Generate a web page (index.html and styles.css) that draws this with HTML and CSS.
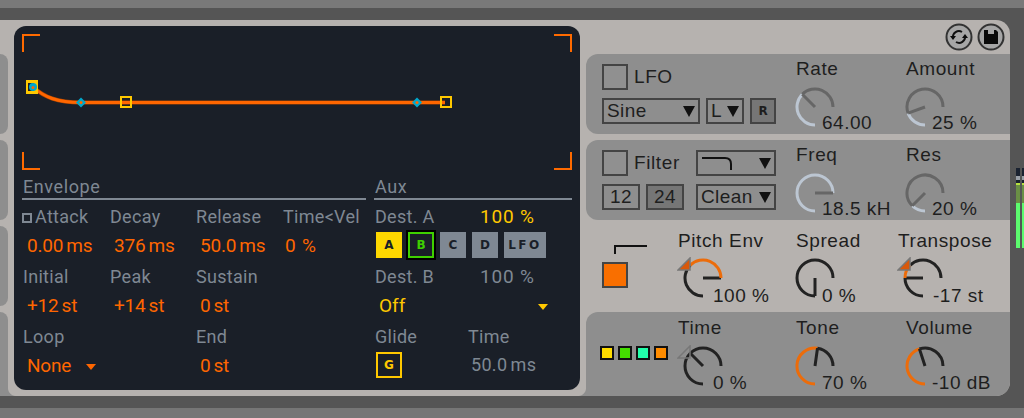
FILE: index.html
```html
<!DOCTYPE html>
<html lang="en">
<head>
    <meta charset="UTF-8">
    <title>Synth device</title>
    <link rel="stylesheet" href="styles.css">
</head>
<body>
    <div class="strip"></div>
    <div class="shelf">
        <div class="device">
            <div class="stubs">
                <div class="stub"></div>
                <div class="stub"></div>
                <div class="stub"></div>
                <div class="stub stub-last"></div>
            </div>

            <div class="screen">
                <svg class="graph" width="550" height="136" viewBox="0 0 550 136">
                    <path class="corner" d="M1 18V1H18M532 1H549V18M1 118V135H18M532 135H549V118"/>
                    <path class="curve-edge" d="M11 53C22 63 35 68.5 59 68.5L423 68.5"/>
                    <path class="curve" d="M11 53C22 63 35 68.5 59 68.5L423 68.5"/>
                    <rect class="handle-on" x="4" y="46" width="12" height="14"/>
                    <rect class="handle-in" x="6" y="49" width="6" height="8"/>
                    <circle class="dot" cx="11" cy="53" r="4"/>
                    <circle class="dot-mid" cx="11" cy="53.5" r="1.5"/>
                    <path class="dot" d="M59 63.5L64 68.5L59 73.5L54 68.5Z"/>
                    <circle class="dot-mid" cx="59" cy="68.5" r="1.5"/>
                    <rect class="handle" x="99" y="63" width="10" height="10"/>
                    <path class="dot" d="M395 63.5L400 68.5L395 73.5L390 68.5Z"/>
                    <circle class="dot-mid" cx="395" cy="68.5" r="1.5"/>
                    <rect class="handle" x="419" y="63" width="10" height="10"/>
                </svg>

                <div class="params">
                    <div class="envelope">
                        <div class="heading">Envelope</div>
                        <div class="env-grid">
                            <div class="param">
                                <div class="label"><span class="tick"></span>Attack</div>
                                <div class="value">0.00 ms</div>
                            </div>
                            <div class="param">
                                <div class="label">Decay</div>
                                <div class="value">376 ms</div>
                            </div>
                            <div class="param">
                                <div class="label">Release</div>
                                <div class="value">50.0 ms</div>
                            </div>
                            <div class="param">
                                <div class="label">Time&lt;Vel</div>
                                <div class="value value-pct">0 %</div>
                            </div>
                            <div class="param">
                                <div class="label">Initial</div>
                                <div class="value">+12 st</div>
                            </div>
                            <div class="param">
                                <div class="label">Peak</div>
                                <div class="value">+14 st</div>
                            </div>
                            <div class="param">
                                <div class="label">Sustain</div>
                                <div class="value">0 st</div>
                            </div>
                            <div class="param"></div>
                            <div class="param">
                                <div class="label">Loop</div>
                                <div class="value">None<span class="arrow"></span></div>
                            </div>
                            <div class="param"></div>
                            <div class="param">
                                <div class="label">End</div>
                                <div class="value">0 st</div>
                            </div>
                        </div>
                    </div>

                    <div class="aux">
                        <div class="heading">Aux</div>
                        <div class="aux-row">
                            <div class="label aux-name">Dest. A</div>
                            <div class="label amount amount-on">100 %</div>
                        </div>
                        <div class="aux-buttons">
                            <div class="dest dest-a">A</div>
                            <div class="dest dest-b">B</div>
                            <div class="dest">C</div>
                            <div class="dest dest-d">D</div>
                            <div class="dest dest-lfo">LFO</div>
                        </div>
                        <div class="aux-row aux-gap">
                            <div class="label aux-name">Dest. B</div>
                            <div class="label amount">100 %</div>
                        </div>
                        <div class="aux-off">Off<span class="arrow arrow-yellow"></span></div>
                        <div class="aux-row aux-gap">
                            <div class="label glide-name">Glide</div>
                            <div class="label">Time</div>
                        </div>
                        <div class="aux-row">
                            <div class="glide-slot"><div class="dest dest-g">G</div></div>
                            <div class="label glide-time">50.0 ms</div>
                        </div>
                    </div>
                </div>
            </div>

            <div class="controls">
                <div class="head">
                    <svg class="head-icon" width="28" height="28" viewBox="0 0 28 28">
                        <circle class="head-ring" cx="14" cy="14" r="12.5"/>
                        <path class="head-line" d="M8 15A6 6 0 0 1 17 9M20 13A6 6 0 0 1 11 19"/>
                        <path class="head-fill" d="M5 13H11L8 17ZM23 15H17L20 11Z"/>
                    </svg>
                    <svg class="head-icon" width="28" height="28" viewBox="0 0 28 28">
                        <circle class="head-ring" cx="14" cy="14" r="12.5"/>
                        <path class="head-fill" d="M7 7H19L21 9V21H7Z"/>
                        <rect class="head-notch" x="11" y="7" width="6" height="4"/>
                    </svg>
                </div>

                <div class="panel panel-gray">
                    <div class="left-wide">
                        <div class="left-row">
                            <div class="check"></div>
                            <div class="caption">LFO</div>
                        </div>
                        <div class="left-row">
                            <div class="box box-sine">Sine<span class="drop"></span></div>
                            <div class="box box-l">L<span class="drop"></span></div>
                            <div class="box box-r">R</div>
                        </div>
                    </div>
                    <div class="knob-col">
                        <div class="knob-label">Rate</div>
                        <div class="knob">
                            <svg class="dial" width="40" height="40" viewBox="0 0 40 40">
                                <path class="off-fill" d="M20 38A18 18 0 0 1 7.27 7.27"/>
                                <path class="off-track" d="M7.27 7.27A18 18 0 0 1 38 20M20 20L7.27 7.27"/>
                            </svg>
                            <div class="knob-value">64.00</div>
                        </div>
                    </div>
                    <div class="knob-col">
                        <div class="knob-label">Amount</div>
                        <div class="knob">
                            <svg class="dial" width="40" height="40" viewBox="0 0 40 40">
                                <path class="off-fill" d="M20 38A18 18 0 0 1 3.09 26.16"/>
                                <path class="off-track" d="M3.09 26.16A18 18 0 1 1 38 20M20 20L3.09 26.16"/>
                            </svg>
                            <div class="knob-value">25 %</div>
                        </div>
                    </div>
                </div>

                <div class="panel panel-gray">
                    <div class="left-wide">
                        <div class="left-row">
                            <div class="check"></div>
                            <div class="caption caption-filter">Filter</div>
                            <div class="box box-shape">
                                <svg class="shape" width="32" height="16" viewBox="0 0 32 16">
                                    <path d="M1 3H24Q30 3 30 9V15"/>
                                </svg>
                                <span class="drop"></span>
                            </div>
                        </div>
                        <div class="left-row">
                            <div class="box box-num">12</div>
                            <div class="box box-num box-dark">24</div>
                            <div class="box box-clean">Clean<span class="drop"></span></div>
                        </div>
                    </div>
                    <div class="knob-col">
                        <div class="knob-label">Freq</div>
                        <div class="knob">
                            <svg class="dial" width="40" height="40" viewBox="0 0 40 40">
                                <path class="off-fill" d="M20 38A18 18 0 1 1 38 20"/>
                                <path class="off-track" d="M20 20L38 20"/>
                            </svg>
                            <div class="knob-value">18.5 kH</div>
                        </div>
                    </div>
                    <div class="knob-col">
                        <div class="knob-label">Res</div>
                        <div class="knob">
                            <svg class="dial" width="40" height="40" viewBox="0 0 40 40">
                                <path class="off-fill" d="M20 38A18 18 0 0 1 7.27 32.73"/>
                                <path class="off-track" d="M7.27 32.73A18 18 0 1 1 38 20M20 20L7.27 32.73"/>
                            </svg>
                            <div class="knob-value">20 %</div>
                        </div>
                    </div>
                </div>

                <div class="panel panel-plain">
                    <div class="left-narrow">
                        <svg class="step" width="46" height="10" viewBox="0 0 46 10">
                            <path d="M13 9V1H45"/>
                        </svg>
                        <div class="check check-on"></div>
                    </div>
                    <div class="knob-col col-first">
                        <div class="knob-label">Pitch Env</div>
                        <div class="knob knob-in">
                            <svg class="dial" width="40" height="40" viewBox="0 0 40 40">
                                <path class="on-track" d="M20 38A18 18 0 0 1 7.27 7.27M20 20L38 20"/>
                                <path class="on-fill" d="M7.27 7.27A18 18 0 0 1 38 20"/>
                            </svg>
                            <svg class="mod" width="14" height="14" viewBox="0 0 14 14">
                                <path class="mod-on" d="M13 1V13H1Z"/>
                            </svg>
                            <div class="knob-value">100 %</div>
                        </div>
                    </div>
                    <div class="knob-col col-b">
                        <div class="knob-label">Spread</div>
                        <div class="knob">
                            <svg class="dial" width="40" height="40" viewBox="0 0 40 40">
                                <path class="on-track" d="M20 38A18 18 0 1 1 38 20M20 20L20 38"/>
                            </svg>
                            <div class="knob-value">0 %</div>
                        </div>
                    </div>
                    <div class="knob-col col-wide">
                        <div class="knob-label">Transpose</div>
                        <div class="knob knob-in">
                            <svg class="dial" width="40" height="40" viewBox="0 0 40 40">
                                <path class="on-track" d="M20 38A18 18 0 0 1 2 20M7.27 7.27A18 18 0 0 1 38 20M20 20L2 20"/>
                                <path class="on-fill" d="M2 20A18 18 0 0 1 7.27 7.27"/>
                            </svg>
                            <svg class="mod" width="14" height="14" viewBox="0 0 14 14">
                                <path class="mod-on" d="M13 1V13H1Z"/>
                            </svg>
                            <div class="knob-value">-17 st</div>
                        </div>
                    </div>
                </div>

                <div class="panel panel-gray panel-last">
                    <div class="left-narrow">
                        <div class="swatches">
                            <div class="swatch swatch-yellow"></div>
                            <div class="swatch swatch-green"></div>
                            <div class="swatch swatch-mint"></div>
                            <div class="swatch swatch-orange"></div>
                        </div>
                    </div>
                    <div class="knob-col col-first">
                        <div class="knob-label">Time</div>
                        <div class="knob knob-in">
                            <svg class="dial" width="40" height="40" viewBox="0 0 40 40">
                                <path class="on-track" d="M20 38A18 18 0 1 1 38 20M20 20L7.27 7.27"/>
                            </svg>
                            <svg class="mod" width="14" height="14" viewBox="0 0 14 14">
                                <path class="mod-off" d="M13 1V13H1Z"/>
                            </svg>
                            <div class="knob-value">0 %</div>
                        </div>
                    </div>
                    <div class="knob-col">
                        <div class="knob-label">Tone</div>
                        <div class="knob">
                            <svg class="dial" width="40" height="40" viewBox="0 0 40 40">
                                <path class="on-fill" d="M20 38A18 18 0 1 1 22.5 2.18"/>
                                <path class="on-track" d="M22.5 2.18A18 18 0 0 1 38 20M20 20L22.5 2.18"/>
                            </svg>
                            <div class="knob-value">70 %</div>
                        </div>
                    </div>
                    <div class="knob-col">
                        <div class="knob-label">Volume</div>
                        <div class="knob">
                            <svg class="dial" width="40" height="40" viewBox="0 0 40 40">
                                <path class="on-fill" d="M20 38A18 18 0 0 1 14.44 2.88"/>
                                <path class="on-track" d="M14.44 2.88A18 18 0 0 1 38 20M20 20L14.44 2.88"/>
                            </svg>
                            <div class="knob-value">-10 dB</div>
                        </div>
                    </div>
                </div>
            </div>
        </div>

        <div class="meter">
            <div class="meter-bar"></div>
            <div class="meter-bar"></div>
        </div>
    </div>
    <div class="strip strip-bottom"></div>
</body>
</html>
```

FILE: styles.css
```css
* {
    box-sizing: border-box;
}
html, body {
    margin: 0;
    padding: 0;
}
body {
    width: 1024px;
    height: 418px;
    overflow: hidden;
    background: #777;
    font-family: "Liberation Sans", Arial, sans-serif;
}
.strip {
    height: 8px;
    background: #797979;
}
.strip-bottom {
    height: 10px;
    background: #767676;
}
.shelf {
    display: flex;
    height: 400px;
    padding: 12px 0;
    background: #555;
}

/* main device */
.device {
    display: flex;
    flex: none;
    width: 1010px;
    height: 376px;
    background: #b6b2af;
    border-radius: 0 14px 14px 0;
}
.stubs {
    display: flex;
    flex-direction: column;
    gap: 6px;
    width: 8px;
    padding-top: 34px;
}
.stub {
    position: relative;
    height: 80px;
    background: #8e8e8e;
    border-radius: 0 10px 10px 0;
}
.stub-last {
    height: 84px;
    border-radius: 0 10px 0 0;
}
.stub-last::after {
    content: "";
    position: absolute;
    right: -8px;
    bottom: 0;
    width: 8px;
    height: 8px;
    background: radial-gradient(circle at 100% 0, #b6b2af 7.5px, #8e8e8e 8.5px);
}

/* dark envelope screen */
.screen {
    width: 566px;
    height: 364px;
    margin: 6px 0 0 6px;
    padding: 8px 8px 0;
    background: #1a1f28;
    border-radius: 12px;
}
.graph {
    display: block;
}
.corner, .curve, .curve-edge, .handle, .step path, .shape path {
    fill: none;
}
.corner {
    stroke: #ff6a00;
    stroke-width: 2;
}
.curve {
    stroke: #ff6600;
    stroke-width: 3;
}
.curve-edge {
    stroke: #a84400;
    stroke-width: 4;
}
.handle {
    stroke: #ffc800;
    stroke-width: 2;
}
.handle-on {
    fill: #ffc800;
}
.handle-in {
    fill: #1a1f28;
}
.dot {
    fill: #00a8cc;
}
.dot-mid {
    fill: #ff6600;
}
.params {
    display: flex;
    gap: 8px;
    margin-top: 6px;
    font-family: Roboto, "Liberation Sans", sans-serif;
}
.heading {
    height: 24px;
    padding-left: 1px;
    font-size: 18px;
    line-height: 22px;
    letter-spacing: 0.6px;
    color: #7f8893;
    border-bottom: 2px solid #7f8893;
}
.envelope {
    width: 344px;
}
.aux {
    width: 198px;
}
.env-grid {
    display: grid;
    grid-template-columns: 87px 86px 87px 84px;
    grid-auto-rows: 56px;
    row-gap: 4px;
    margin-top: 3px;
}
.label {
    height: 28px;
    padding-left: 1px;
    font-size: 18px;
    line-height: 28px;
    letter-spacing: 0.3px;
    white-space: nowrap;
    color: #7f8893;
}
.value {
    display: flex;
    align-items: center;
    height: 28px;
    padding-left: 5px;
    font-size: 19px;
    letter-spacing: -0.2px;
    word-spacing: -1.5px;
    color: #ff6600;
}
.value-pct {
    padding-left: 3px;
    letter-spacing: 1.6px;
}
.tick {
    display: inline-block;
    width: 10px;
    height: 10px;
    margin: 0 3px 0 -1px;
    border: 2px solid #7f8893;
}
.arrow {
    width: 0;
    height: 0;
    margin: 3px 0 0 15px;
    border-style: solid;
    border-width: 6px 5px 0;
    border-color: #ff6600 transparent transparent;
}
.arrow-yellow {
    margin-left: auto;
    border-top-color: #ffc800;
}
.aux-row {
    display: flex;
    margin-top: 3px;
}
.aux-row + .aux-row {
    margin-top: 0;
}
.aux-name {
    width: 105px;
}
.amount {
    font-size: 19px;
    letter-spacing: 0.8px;
}
.amount-on {
    color: #ffc800;
}
.aux-buttons {
    display: flex;
    height: 28px;
    padding: 1px 0 0 2px;
}
.dest {
    display: flex;
    align-items: center;
    justify-content: center;
    width: 26px;
    height: 26px;
    margin-right: 6px;
    font-family: "DejaVu Sans", sans-serif;
    font-size: 12px;
    font-weight: bold;
    color: #1a1f28;
    background: #7f8893;
}
.dest-a {
    margin-right: 4px;
    background: #ffd800;
}
.dest-b {
    width: 30px;
    height: 30px;
    margin: -2px 4px 0 0;
    color: #3fd000;
    background: #1a1f28;
    border: 2px solid #000;
    box-shadow: inset 0 0 0 2px #3fd000;
}
.dest-lfo {
    width: 42px;
    margin-right: 0;
    letter-spacing: 2.5px;
}
.dest-g {
    margin: 1px 0 0 2px;
    color: #ffc800;
    background: none;
    border: 2px solid #ffc800;
}
.aux-gap {
    margin-top: 4px;
}
.aux-off {
    display: flex;
    align-items: center;
    height: 28px;
    padding: 0 24px 0 5px;
    font-size: 19px;
    color: #ffc800;
}
.glide-name, .glide-slot {
    width: 93px;
}
.glide-time {
    padding-left: 4px;
    line-height: 28px;
    word-spacing: -1.5px;
}

/* right hand controls */
.controls {
    flex: none;
    width: 424px;
    margin-left: 6px;
    color: #1e1e1e;
}
.head {
    display: flex;
    justify-content: flex-end;
    gap: 4px;
    height: 34px;
    padding: 3px 5px 0 0;
}
.head-ring {
    fill: #a6a6a6;
    stroke: #333;
    stroke-width: 2;
}
.head-line {
    fill: none;
    stroke: #111;
    stroke-width: 2;
}
.head-fill {
    fill: #0a0a0a;
}
.head-notch {
    fill: #a6a6a6;
}
.panel {
    position: relative;
    display: flex;
    height: 80px;
    margin-bottom: 6px;
}
.panel-gray {
    background: #8e8e8e;
    border-radius: 12px 0 0 12px;
}
.panel-last {
    height: 84px;
    margin-bottom: 0;
    padding-top: 1px;
    border-radius: 12px 0 14px 0;
}
.panel-last::before {
    content: "";
    position: absolute;
    left: -8px;
    bottom: 0;
    width: 8px;
    height: 8px;
    background: radial-gradient(circle at 0 0, #b6b2af 7.5px, #8e8e8e 8.5px);
}
.left-wide {
    flex: none;
    width: 210px;
    padding: 10px 0 0 16px;
}
.left-narrow {
    position: relative;
    display: flex;
    flex: none;
    flex-direction: column;
    width: 92px;
    padding-left: 16px;
}
.left-row {
    display: flex;
    align-items: center;
    height: 26px;
    margin-bottom: 8px;
}
.check {
    width: 26px;
    height: 26px;
    border: 2px solid #444;
    background: #909090;
}
.check-on {
    background: #f96f00;
}
.step {
    display: block;
    margin: 19px 0 7px;
}
.step path {
    stroke: #111;
    stroke-width: 2;
}
.caption {
    margin-left: 6px;
    font-size: 19px;
    letter-spacing: 0.6px;
}
.caption-filter {
    width: 62px;
}
.box {
    display: flex;
    align-items: center;
    height: 26px;
    margin-right: 6px;
    padding-left: 3px;
    font-size: 19px;
    letter-spacing: 0.4px;
    border: 2px solid #444;
}
.box-sine {
    justify-content: space-between;
    width: 98px;
    padding-right: 3px;
}
.box-l {
    justify-content: space-between;
    width: 38px;
    padding-right: 3px;
}
.box-r {
    justify-content: center;
    width: 26px;
    margin-right: 0;
    padding: 0;
    font-family: "DejaVu Sans", sans-serif;
    font-size: 12px;
    font-weight: bold;
    letter-spacing: 0;
    background: #767676;
}
.box-shape {
    justify-content: space-between;
    width: 80px;
    margin-right: 0;
    padding: 0 3px;
}
.shape path {
    stroke: #111;
    stroke-width: 2;
}
.box-num {
    justify-content: center;
    width: 38px;
    margin-right: 6px;
    padding: 0;
}
.box-dark {
    margin-right: 12px;
    background: #767676;
}
.box-clean {
    justify-content: space-between;
    width: 80px;
    margin-right: 0;
    padding-right: 3px;
}
.drop {
    width: 0;
    height: 0;
    border-style: solid;
    border-width: 11px 6px 0;
    border-color: #111 transparent transparent;
}
.knob-col {
    flex: none;
    width: 110px;
}
.col-first {
    width: 118px;
}
.col-b {
    width: 102px;
}
.col-wide {
    width: 112px;
}
.knob-label {
    height: 33px;
    font-size: 19px;
    line-height: 30px;
    letter-spacing: 0.6px;
    white-space: nowrap;
}
.panel-plain .knob-label {
    height: 32px;
}
.knob {
    position: relative;
    height: 44px;
    margin-left: -1px;
}
.knob-in {
    margin-left: 5px;
}
.dial {
    display: block;
}
.dial path {
    fill: none;
    stroke-width: 3;
}
.off-fill {
    stroke: #bcc6d2;
}
.off-track {
    stroke: #666;
}
.on-fill {
    stroke: #ec6c0a;
}
.on-track {
    stroke: #222;
}
.knob-value {
    position: absolute;
    left: 27px;
    top: 26px;
    font-size: 19px;
    line-height: 20px;
    letter-spacing: 0.5px;
    white-space: nowrap;
}
.knob-in .knob-value {
    left: 30px;
}
.panel-plain .knob-value {
    top: 28px;
}
.panel-last .knob-value {
    top: 27px;
}
.mod {
    position: absolute;
    left: -6px;
    top: -1px;
}
.mod-on {
    fill: #d9580a;
    stroke: #777;
    stroke-width: 1.5;
}
.mod-off {
    fill: none;
    stroke: #777;
    stroke-width: 1.5;
}
.swatches {
    display: flex;
    gap: 4px;
    margin: 33px 0 0 -2px;
}
.swatch {
    flex: none;
    width: 14px;
    height: 14px;
    border: 2px solid #111;
}
.swatch-yellow {
    background: #ffdd00;
}
.swatch-green {
    background: #44dd00;
}
.swatch-mint {
    background: #22ffaa;
}
.swatch-orange {
    background: #ff8c00;
}

/* level meter */
.meter {
    display: flex;
    gap: 2px;
    margin: 148px 0 0 6px;
}
.meter-bar {
    flex: none;
    width: 4px;
    height: 80px;
    background: linear-gradient(#1a2230 0 8px, #9aa0a8 8px 12px, #1a2230 12px 15px, #b8e040 15px 17px, #6a8f45 17px 35px, #5cfb6e 35px);
}
```
